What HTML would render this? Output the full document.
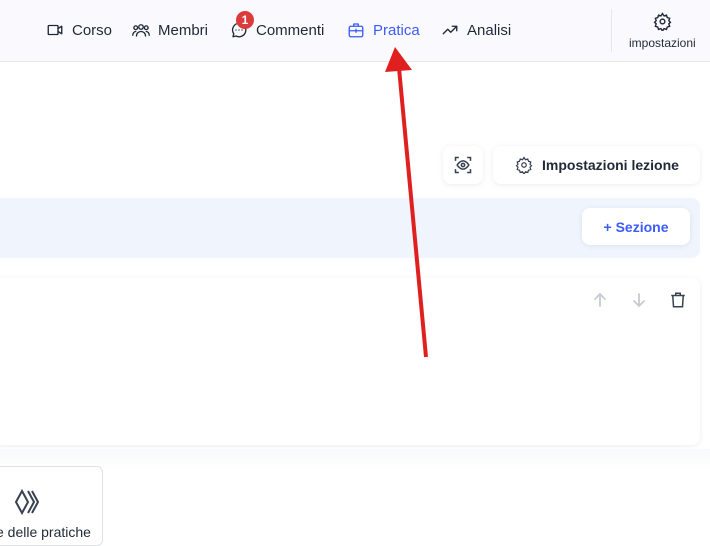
<!DOCTYPE html>
<html><head><meta charset="utf-8"><style>
*{margin:0;padding:0;box-sizing:border-box}
body{width:710px;height:532px;overflow:hidden;background:#fff;font-family:"Liberation Sans",sans-serif;position:relative;color:#1f2937}
.nav{position:absolute;left:0;top:0;width:710px;height:62px;background:#fafafe;border-bottom:1px solid #e5e7eb}
.it{position:absolute;top:21px;font-size:15px;display:flex;align-items:center;gap:8px;color:#1f2937}
.it svg{width:18px;height:18px;fill:none;stroke:currentColor;stroke-width:1.8;stroke-linecap:round;stroke-linejoin:round}
.badge{position:absolute;left:236px;top:11px;width:18px;height:18px;border-radius:50%;background:#dc3b3b;color:#fff;font-size:12px;font-weight:bold;text-align:center;line-height:18px}
.sep{position:absolute;left:611px;top:9px;width:1px;height:43px;background:#e5e7eb}
.card{position:absolute;background:#fff;border-radius:8px;box-shadow:0 1px 6px rgba(0,0,0,.08)}
</style></head><body>
<div class="nav">
<div class="it" style="left:46px"><svg viewBox="0 0 24 24"><rect x="3" y="6" width="13" height="12" rx="1"/><path d="M16 10l5-3v10l-5-3"/></svg>Corso</div>
<div class="it" style="left:132px"><svg viewBox="0 0 24 24"><circle cx="12" cy="8" r="3"/><circle cx="5" cy="9" r="2.5"/><circle cx="19" cy="9" r="2.5"/><path d="M6 20c0-4 3-6 6-6s6 2 6 6M1 19c0-3 2-5 4-5M23 19c0-3-2-5-4-5"/></svg>Membri</div>
<div class="it" style="left:230px"><svg viewBox="0 0 24 24"><path d="M12 3a9 9 0 0 0-7 14l-1 4 4-1a9 9 0 1 0 4-17z"/><path d="M8 12h.01M12 12h.01M16 12h.01"/></svg>Commenti</div>
<div class="badge">1</div>
<div class="it" style="left:347px;color:#3b5bfd"><svg viewBox="0 0 24 24"><rect x="3" y="7" width="18" height="14" rx="2"/><path d="M9 7V4h6v3M3 13h18M12 11v4"/></svg>Pratica</div>
<div class="it" style="left:441px"><svg viewBox="0 0 24 24"><path d="M3 17l6-6 4 4 8-8M15 7h6v6"/></svg>Analisi</div>
<div class="sep"></div>
<svg style="position:absolute;left:653px;top:12px" width="19" height="19" viewBox="0 0 24 24" fill="none" stroke="#1f2937" stroke-width="1.8"><circle cx="12" cy="12" r="3"/><path d="M12 2l2 3 3-1 1 3 3 1-1 3 2 2-2 2 1 3-3 1-1 3-3-1-2 3-2-3-3 1-1-3-3-1 1-3-2-2 2-2-1-3 3-1 1-3 3 1z"/></svg>
<div style="position:absolute;left:629px;top:36px;font-size:12px;color:#1f2937">impostazioni</div>
</div>
<div class="card" style="left:443px;top:146px;width:40px;height:38px"><svg style="position:absolute;left:10px;top:9px" width="20" height="20" viewBox="0 0 24 24" fill="none" stroke="#374151" stroke-width="1.8"><path d="M3 7V3h4M17 3h4v4M21 17v4h-4M7 21H3v-4"/><path d="M5 12s3-5 7-5 7 5 7 5-3 5-7 5-7-5-7-5z"/><circle cx="12" cy="12" r="2"/></svg></div>
<div class="card" style="left:493px;top:146px;width:207px;height:38px"><svg style="position:absolute;left:22px;top:10px" width="18" height="18" viewBox="0 0 24 24" fill="none" stroke="#374151" stroke-width="1.6"><circle cx="12" cy="12" r="3"/><path d="M12 2l2 3 3-1 1 3 3 1-1 3 2 2-2 2 1 3-3 1-1 3-3-1-2 3-2-3-3 1-1-3-3-1 1-3-2-2 2-2-1-3 3-1 1-3 3 1z"/></svg><span style="position:absolute;left:49px;top:11px;font-size:14px;font-weight:bold;color:#1f2937">Impostazioni lezione</span></div>
<div style="position:absolute;left:0;top:198px;width:700px;height:60px;background:#eff4fd;border-radius:0 8px 8px 0"></div>
<div class="card" style="left:582px;top:208px;width:108px;height:37px;color:#3b5bfd;font-size:14px;font-weight:bold;text-align:center;line-height:39px">+ Sezione</div>
<div class="card" style="left:-10px;top:278px;width:710px;height:167px"></div>
<svg style="position:absolute;left:593px;top:292px" width="14" height="16" viewBox="0 0 14 16" fill="none" stroke="#c7cad1" stroke-width="1.8" stroke-linecap="round"><path d="M7 14V2M2 7l5-5 5 5"/></svg>
<svg style="position:absolute;left:632px;top:292px" width="14" height="16" viewBox="0 0 14 16" fill="none" stroke="#c7cad1" stroke-width="1.8" stroke-linecap="round"><path d="M7 2v12M2 9l5 5 5-5"/></svg>
<svg style="position:absolute;left:669px;top:291px" width="18" height="18" viewBox="0 0 24 24" fill="none" stroke="#374151" stroke-width="2"><path d="M3 6h18M9 6V3h6v3M5 6l1 15h12l1-15"/></svg>
<div style="position:absolute;left:0;top:449px;width:710px;height:83px;background:linear-gradient(#f8f9fa,#fff 25px)"></div>
<div style="position:absolute;left:-10px;top:466px;width:113px;height:80px;background:#fff;border:1px solid #dfe1e6;border-radius:6px"></div>
<svg style="position:absolute;left:13px;top:488px" width="28" height="28" viewBox="0 0 28 28" fill="none" stroke="#374151" stroke-width="2"><path d="M9 3L3 14l6 11 6-11z"/><path d="M15 3l6 11-6 11M19 3l6 11-6 11"/></svg>
<div style="position:absolute;left:-4px;top:524px;font-size:14px;color:#1f2937;white-space:nowrap">e delle pratiche</div>
<svg style="position:absolute;left:0;top:0" width="710" height="532"><line x1="426" y1="357" x2="399" y2="68" stroke="#e0201f" stroke-width="4"/><polygon points="395,47 385,72 412,70" fill="#e0201f"/></svg>
</body></html>
